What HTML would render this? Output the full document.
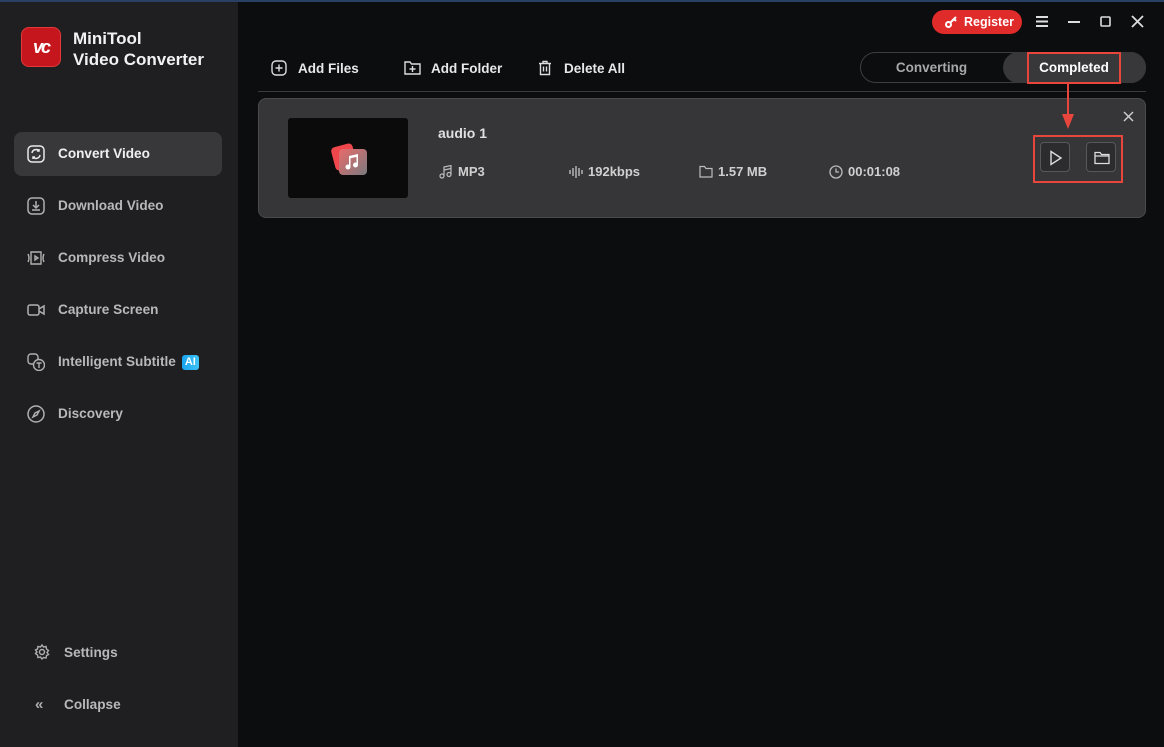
<!DOCTYPE html>
<html><head><meta charset="utf-8"><style>
*{margin:0;padding:0;box-sizing:border-box}
body{width:1164px;height:747px;overflow:hidden;background:#0c0d0f;font-family:"Liberation Sans",sans-serif;font-weight:bold;position:relative}
.sb{position:absolute;left:0;top:0;width:238px;height:747px;background:#1f1f21}
.top{position:absolute;left:0;top:0;width:1164px;height:2px;background:#2a3f66}
.logo{position:absolute;left:21px;top:27px;width:40px;height:40px;border-radius:8px;background:#c4161c;border:1px solid #e23a3a;color:#fff;font-size:18px;font-style:italic;text-align:center;line-height:38px;letter-spacing:-2px}
.brand{position:absolute;left:73px;top:28px;color:#f2f2f2;font-size:17px;line-height:21px}
.nav{position:absolute;left:14px;width:208px;height:44px;color:#b8b8b8;font-size:13.6px;line-height:44px;padding-left:44px}
.nav.act{background:#38383a;border-radius:8px;color:#f0f0f0}
.nav svg{position:absolute;left:13px;top:13px}
.ai{display:inline-block;background:linear-gradient(90deg,#1aa3f0,#3dc3f5);color:#fff;font-size:11px;line-height:15px;padding:0 3px;border-radius:3px;margin-left:6px;vertical-align:1px}
.tb{position:absolute;top:60px;color:#e8e8e8;font-size:13.5px;line-height:18px}
.tb svg{position:absolute;left:-27px;top:0}
.line{position:absolute;left:258px;top:91px;width:888px;height:1px;background:#3a3a3c}
.card{position:absolute;left:258px;top:98px;width:888px;height:120px;background:#363638;border:1px solid #4a4a4c;border-radius:8px}
.meta{position:absolute;top:65px;color:#d0d0d0;font-size:13px;line-height:16px}
.meta svg{position:absolute;left:-19px;top:1px}
</style></head><body>
<div class="sb"></div>
<div class="top"></div>
<div class="logo">vc</div>
<div class="brand">MiniTool<br>Video Converter</div>

<div class="nav act" style="top:132px"><svg width="18" height="18" viewBox="0 0 18 18" fill="none" stroke="#e8e8e8" stroke-width="1.5"><rect x="1" y="1" width="16" height="16" rx="4"/><path d="M5 8a4 4 0 0 1 7-2M13 10a4 4 0 0 1-7 2M12 4v2h-2M6 14v-2h2"/></svg>Convert Video</div>
<div class="nav" style="top:184px"><svg width="18" height="18" viewBox="0 0 18 18" fill="none" stroke="#b0b0b0" stroke-width="1.5"><rect x="1" y="1" width="16" height="16" rx="4"/><path d="M9 4v7M6 8l3 3 3-3M5 13h8"/></svg>Download Video</div>
<div class="nav" style="top:236px"><svg width="18" height="18" viewBox="0 0 18 18" fill="none" stroke="#b0b0b0" stroke-width="1.4"><path d="M1 5q2 4 0 8M17 5q-2 4 0 8M4 3h10v12H4zM8 7l3 2-3 2z"/></svg>Compress Video</div>
<div class="nav" style="top:288px"><svg width="18" height="18" viewBox="0 0 18 18" fill="none" stroke="#b0b0b0" stroke-width="1.5"><rect x="1" y="4" width="11" height="10" rx="2"/><path d="M12 8l5-3v8l-5-3"/></svg>Capture Screen</div>
<div class="nav" style="top:340px"><svg width="18" height="18" viewBox="0 0 18 18" fill="none" stroke="#b0b0b0" stroke-width="1.4"><rect x="1" y="1" width="10" height="10" rx="3"/><circle cx="12" cy="12" r="5.5" fill="#1f1f21"/><path d="M9.5 10h5M12 10v5"/></svg>Intelligent Subtitle<span class="ai">AI</span></div>
<div class="nav" style="top:392px"><svg width="18" height="18" viewBox="0 0 18 18" fill="none" stroke="#b0b0b0" stroke-width="1.5"><circle cx="9" cy="9" r="8"/><path d="M12 6l-2 4-4 2 2-4z"/></svg>Discovery</div>
<div class="nav" style="top:631px;padding-left:50px"><svg style="left:20px" width="16" height="16" viewBox="0 0 16 16" fill="none" stroke="#b0b0b0" stroke-width="1.4"><circle cx="8" cy="8" r="2.5"/><path d="M8 1l1.5 2 2.5-.5.5 2.5 2 1.5-1.5 2 1.5 2-2 1-.5 2.5-2.5-.5L8 15l-1.5-2-2.5.5-.5-2.5-2-1.5L3 8 1.5 6l2-1L4 2.5l2.5.5z"/></svg>Settings</div>
<div class="nav" style="top:683px;padding-left:50px"><span style="position:absolute;left:21px;color:#b0b0b0;font-size:15px">«</span>Collapse</div>

<div style="position:absolute;left:932px;top:10px;width:90px;height:24px;background:#e02b2b;border-radius:12px;color:#fff;font-size:12.5px;line-height:24px;padding-left:32px"><svg style="position:absolute;left:12px;top:5px" width="14" height="14" viewBox="0 0 14 14" fill="none" stroke="#fff" stroke-width="2"><circle cx="4.5" cy="9.5" r="2.5"/><path d="M6.5 7.5L12 2M10 4l2 2"/></svg>Register</div>
<svg style="position:absolute;left:1036px;top:16px" width="12" height="11" stroke="#ddd" stroke-width="2"><path d="M0 1h12M0 5.5h12M0 10h12"/></svg>
<svg style="position:absolute;left:1068px;top:15px" width="12" height="12" stroke="#ddd" stroke-width="2"><path d="M0 7h12"/></svg>
<svg style="position:absolute;left:1100px;top:16px" width="11" height="11" fill="none" stroke="#ddd" stroke-width="1.6"><rect x="1" y="1" width="9" height="9" rx="1"/></svg>
<svg style="position:absolute;left:1131px;top:15px" width="13" height="13" stroke="#ddd" stroke-width="1.8"><path d="M1 1l11 11M12 1L1 12"/></svg>

<div class="tb" style="left:298px"><svg width="16" height="16" viewBox="0 0 16 16" fill="none" stroke="#ddd" stroke-width="1.4"><rect x="1" y="1" width="14" height="14" rx="4"/><path d="M8 4.5v7M4.5 8h7"/></svg>Add Files</div>
<div class="tb" style="left:431px"><svg width="17" height="16" viewBox="0 0 17 16" fill="none" stroke="#ddd" stroke-width="1.4"><path d="M1 2h5l1.5 2H16v10H1z"/><path d="M8.5 6v6M5.5 9h6"/></svg>Add Folder</div>
<div class="tb" style="left:564px"><svg width="16" height="16" viewBox="0 0 16 16" fill="none" stroke="#ddd" stroke-width="1.4"><path d="M2 3.5h12M6 3.5V1.5h4v2M3.5 3.5v11h9v-11M6.5 6.5v5M9.5 6.5v5"/></svg>Delete All</div>

<div style="position:absolute;left:860px;top:52px;width:286px;height:31px;border:1px solid #3e3e40;border-radius:16px;background:#0c0d0f"></div>
<div style="position:absolute;left:1003px;top:52px;width:143px;height:31px;background:#38383a;border-radius:16px"></div>
<div style="position:absolute;left:860px;top:60px;width:143px;text-align:center;color:#a8a8a8;font-size:13.5px">Converting</div>
<div style="position:absolute;left:1027px;top:52px;width:94px;height:32px;border:2px solid #e8463c;color:#fff;font-size:13.5px;text-align:center;line-height:28px">Completed</div>
<div class="line"></div>

<div class="card">
<div style="position:absolute;left:29px;top:19px;width:120px;height:80px;background:#0b0b0b;border-radius:3px"></div>
<div style="position:absolute;left:74px;top:46px;width:22px;height:24px;background:#f0474c;border-radius:4px;transform:rotate(-15deg)"></div>
<div style="position:absolute;left:80px;top:50px;width:28px;height:26px;background:linear-gradient(135deg,#e86a6a,#7b7b80);border-radius:4px"></div>
<svg style="position:absolute;left:86px;top:55px" width="14" height="16" viewBox="0 0 14 16" fill="#fff"><path d="M4 2l9-2v11h-1.5V3L5.5 4.3V13H4z"/><circle cx="3" cy="13" r="2.5"/><circle cx="10.5" cy="11" r="2.5"/></svg>
<div style="position:absolute;left:179px;top:26px;color:#e0e0e0;font-size:14px">audio 1</div>
<div class="meta" style="left:199px"><svg width="14" height="14" viewBox="0 0 14 14" fill="none" stroke="#bbb" stroke-width="1.2"><path d="M5 11V2l7-1.5v9"/><circle cx="3" cy="11" r="2"/><circle cx="10" cy="9.5" r="2"/><path d="M5 5l7-1.5"/></svg>MP3</div>
<div class="meta" style="left:329px"><svg width="14" height="14" stroke="#bbb" stroke-width="1.4"><path d="M1 5v4M4 3v8M7 1v12M10 3v8M13 5v4"/></svg>192kbps</div>
<div class="meta" style="left:459px"><svg width="14" height="13" fill="none" stroke="#bbb" stroke-width="1.2"><path d="M1 1.5h4.5l1.5 2H13v8.5H1z"/></svg>1.57 MB</div>
<div class="meta" style="left:589px"><svg width="14" height="14" fill="none" stroke="#bbb" stroke-width="1.3"><circle cx="7" cy="7" r="6"/><path d="M7 3.5V7h3"/></svg>00:01:08</div>
<svg style="position:absolute;left:864px;top:12px" width="11" height="11" stroke="#ccc" stroke-width="1.5"><path d="M1 1l9 9M10 1l-9 9"/></svg>
<div style="position:absolute;left:774px;top:36px;width:90px;height:48px;border:2px solid #e8463c"></div>
<div style="position:absolute;left:781px;top:43px;width:30px;height:30px;border:1px solid #58585a;border-radius:4px;background:#2c2c2e"><svg style="position:absolute;left:8px;top:7px" width="14" height="16" fill="none" stroke="#ddd" stroke-width="1.4"><path d="M2 1.5l10 6.5-10 6.5z"/></svg></div>
<div style="position:absolute;left:827px;top:43px;width:30px;height:30px;border:1px solid #58585a;border-radius:4px;background:#2c2c2e"><svg style="position:absolute;left:7px;top:8px" width="16" height="14" fill="none" stroke="#ddd" stroke-width="1.3"><path d="M1 1.5h5l1.5 2H15v9H1zM1 5h14"/></svg></div>
</div>
<svg style="position:absolute;left:1061px;top:84px" width="14" height="46"><path d="M7 0v34" stroke="#e8463c" stroke-width="2"/><path d="M1 30l6 15 6-15z" fill="#e8463c"/></svg>
</body></html>
